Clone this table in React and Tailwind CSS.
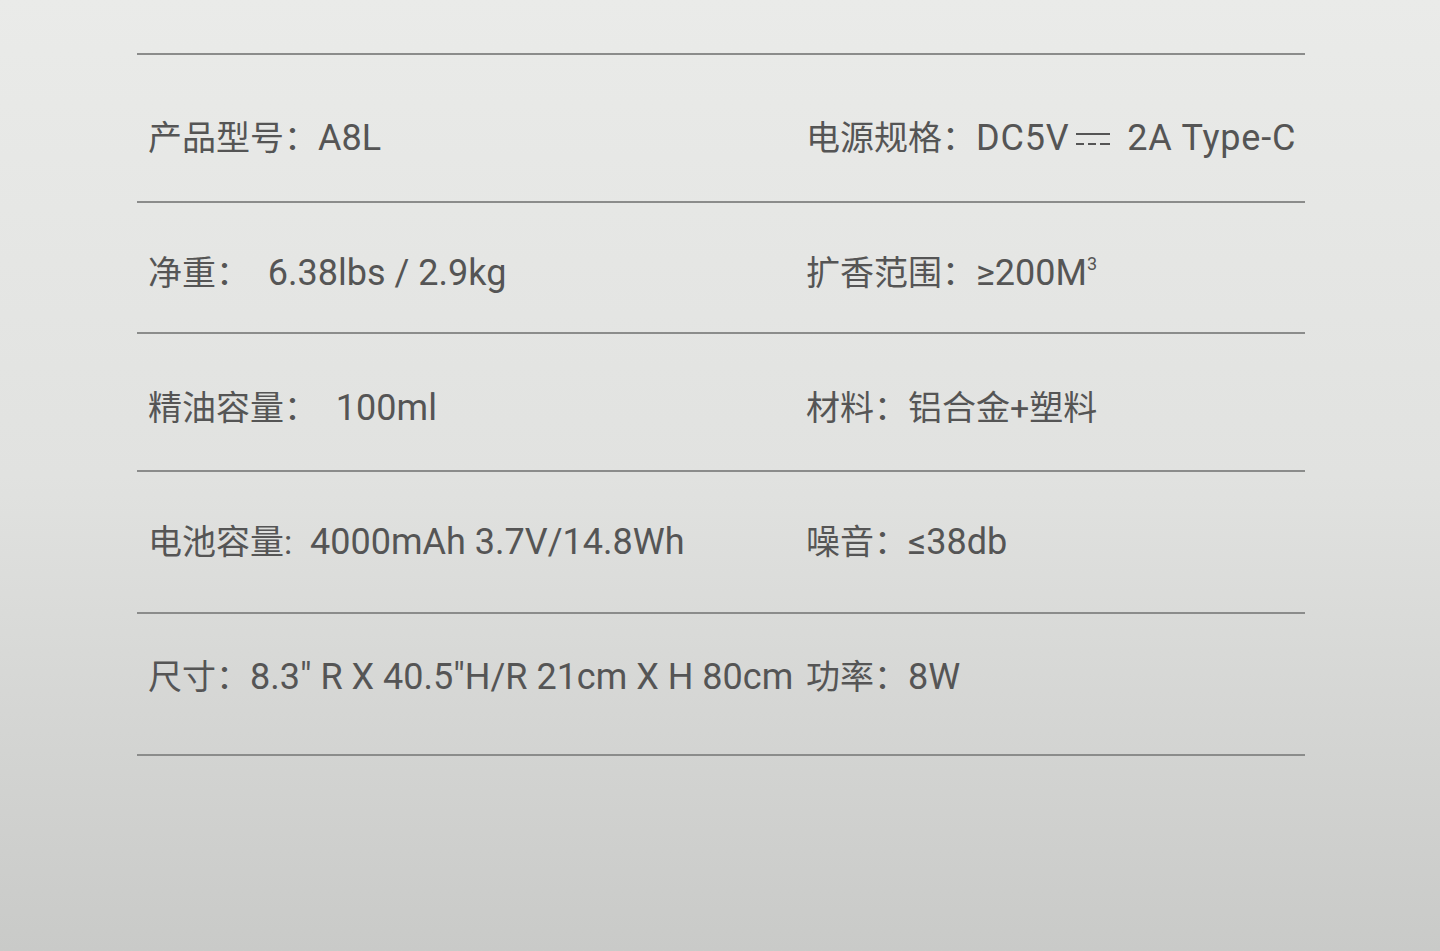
import React from 'react'

const DcSymbol = () => (
    <svg width="42" height="20" viewBox="0 0 42 20" className="inline-block mx-[3px] align-middle">
        <rect x="4" y="3" width="34" height="2" fill="#555" />
        <rect x="4" y="13" width="8" height="2" fill="#555" />
        <rect x="16" y="13" width="8" height="2" fill="#555" />
        <rect x="28" y="13" width="10" height="2" fill="#555" />
    </svg>
)

const Spec = ({ label, value, cjk, wide }) => (
    <span className="whitespace-pre">
        <span className="text-[34px]">{label}</span>
        <span className={`${cjk ? 'text-[34px]' : 'text-[36px]'} ${wide ? 'tracking-[0.8px]' : ''}`}>{value}</span>
    </span>
)

const rows = [
    {
        h: 'h-[148px]', pt: 'pt-[63px]',
        left: <Spec label="产品型号：" value="A8L" />,
        right: <Spec label="电源规格：" value={<>DC5V<DcSymbol /> 2A Type-C</>} wide />,
    },
    {
        h: 'h-[131px]', pt: 'pt-[50px]',
        left: <Spec label="净重：" value="  6.38lbs / 2.9kg" />,
        right: <Spec label="扩香范围：" value={<>≥200M<span className="text-[18px] relative -top-[15px]">3</span></>} />,
    },
    {
        h: 'h-[138px]', pt: 'pt-[54px]',
        left: <Spec label="精油容量：" value="  100ml" />,
        right: <Spec label="材料：" value="铝合金+塑料" cjk />,
    },
    {
        h: 'h-[142px]', pt: 'pt-[50px]',
        left: <Spec label="电池容量:" value="  4000mAh 3.7V/14.8Wh" />,
        right: <Spec label="噪音：" value="≤38db" />,
    },
    {
        h: 'h-[142px]', pt: 'pt-[43px]',
        left: <Spec label="尺寸：" value={'8.3" R X 40.5"H/R 21cm X H 80cm'} />,
        right: <Spec label="功率：" value="8W" />,
    },
]

const App = () => {
    return (
        <div
            className="w-full min-h-[951px] bg-gradient-to-b from-[#eaebe9] via-[#e1e2e0] to-[#c9cac8] overflow-hidden"
            style={{ fontFamily: 'Roboto, "Noto Sans CJK SC", sans-serif' }}
        >
            <div className="ml-[137px] w-[1168px] mt-[53px] border-t-2 border-[#8b8c8b]">
                {rows.map((r, i) => (
                    <div key={i} className={`flex border-b-2 border-[#8b8c8b] ${r.h} ${r.pt}`}>
                        <div className="w-[669px] pl-[11px] leading-[40px] text-[#555555]">
                            {r.left}
                        </div>
                        <div className="flex-1 leading-[40px] text-[#555555]">
                            {r.right}
                        </div>
                    </div>
                ))}
            </div>
        </div>
    )
}

export default App
